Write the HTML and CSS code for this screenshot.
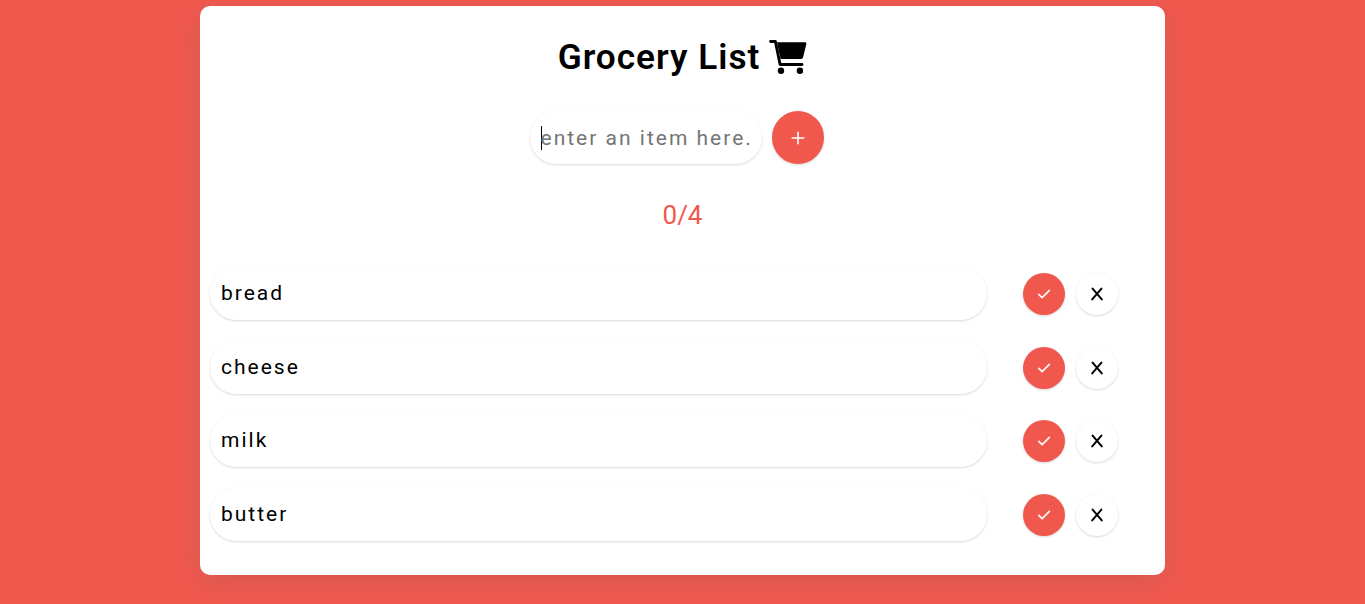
FILE: index.html
```
<!DOCTYPE html>
<html lang="en">
<head>
<meta charset="utf-8">
<title>Grocery List</title>
<link rel="stylesheet" href="styles.css">
</head>
<body>
<svg class="sprite" aria-hidden="true">
  <symbol id="check" viewBox="0 0 14 14"><path d="M1.8 7.4 5.1 10.6 12.4 3.4"/></symbol>
  <symbol id="cross" viewBox="0 0 14 14"><path d="M2.6 1.6 11.8 12.4M11.4 1.6 2.2 12.4"/></symbol>
</svg>
<main class="card">
  <h1 class="title"><span>Grocery List</span>
    <svg class="cart" viewBox="0 0 38 34"><path class="handle" d="M1.6 1.5H6.4L11.1 24.5H33"/><path d="M8 2.3H36.2Q37.8 2.3 37.4 4L34 17.6Q33.6 19 32 19H11.6Z"/><circle cx="12" cy="30.7" r="3.2"/><circle cx="30.9" cy="30.7" r="3.2"/></svg>
  </h1>
  <form class="entry">
    <label class="field"><i class="caret"></i><input class="input" type="text" placeholder="enter an item here."></label>
    <button class="add" type="button"><svg viewBox="0 0 14 14"><path d="M7 1.2V12.8M1.2 7H12.8"/></svg></button>
  </form>
  <p class="count">0/4</p>
  <ul class="list">
    <li class="row"><span class="item">bread</span><button class="btn done"><svg><use href="#check"/></svg></button><button class="btn remove"><svg><use href="#cross"/></svg></button></li>
    <li class="row"><span class="item">cheese</span><button class="btn done"><svg><use href="#check"/></svg></button><button class="btn remove"><svg><use href="#cross"/></svg></button></li>
    <li class="row"><span class="item">milk</span><button class="btn done"><svg><use href="#check"/></svg></button><button class="btn remove"><svg><use href="#cross"/></svg></button></li>
    <li class="row"><span class="item">butter</span><button class="btn done"><svg><use href="#check"/></svg></button><button class="btn remove"><svg><use href="#cross"/></svg></button></li>
  </ul>
</main>
</body>
</html>
```
FILE: styles.css
```
* { box-sizing: border-box; margin: 0; padding: 0; }
body {
  height: 604px;
  padding-top: 6px;
  overflow: hidden;
  background: #f1584d;
  font-family: Roboto, sans-serif;
  color: #000;
}
.sprite { display: none; }
.card {
  width: 965px;
  height: 569px;
  margin: 0 auto;
  padding: 30px 10px 0;
  border-radius: 10px;
  background: #fff;
  box-shadow: rgba(100, 100, 111, 0.2) 0 7px 29px 0;
}
.title {
  display: flex;
  justify-content: center;
  height: 42px;
  font-size: 35.2px;
  line-height: 42px;
  font-weight: 600;
  letter-spacing: 1px;
}
.cart { width: 38px; height: 34px; margin: 4px 0 0 9px; }
.handle { fill: none; stroke: #000; stroke-width: 2.9; stroke-linecap: round; stroke-linejoin: round; }
.entry { display: flex; gap: 10px; margin: 33px 0 0 319.5px; }
.field, .item, .add, .btn {
  box-shadow: rgba(0, 0, 0, 0.1) 0 1px 3px 0, rgba(0, 0, 0, 0.06) 0 1px 2px 0;
}
.field {
  display: flex;
  align-items: center;
  width: 232px;
  height: 53px;
  padding-left: 11px;
  border-radius: 27px;
}
.caret { width: 1px; height: 24px; margin: 1px -1px 0 0; background: #000; }
.input {
  width: 218px;
  border: 0;
  outline: 0;
  background: none;
  font: 400 21px Roboto, sans-serif;
  letter-spacing: 2px;
}
.input::placeholder { color: #757575; }
button { display: grid; place-items: center; border: 0; border-radius: 50%; }
svg { fill: #000; }
button svg { width: 14px; height: 14px; fill: none; stroke: #fff; stroke-width: 1.6; stroke-linecap: round; }
.add { width: 52px; height: 53px; background: #f1584d; }
.count { margin-top: 36px; text-align: center; font-size: 26px; line-height: 30px; color: #f1584d; }
.list { display: grid; gap: 20.5px; margin-top: 37px; list-style: none; }
.row { display: flex; align-items: center; height: 53px; }
.item {
  width: 777px;
  height: 53px;
  padding-left: 11px;
  border-radius: 27px;
  font-size: 21px;
  line-height: 52px;
  letter-spacing: 2px;
}
.btn { width: 42px; height: 42px; margin-top: 1px; }
.done { margin-left: 35.5px; background: #f1584d; }
.remove { margin-left: 11px; background: #fff; }
.remove svg { stroke: #000; stroke-width: 2; }
```
